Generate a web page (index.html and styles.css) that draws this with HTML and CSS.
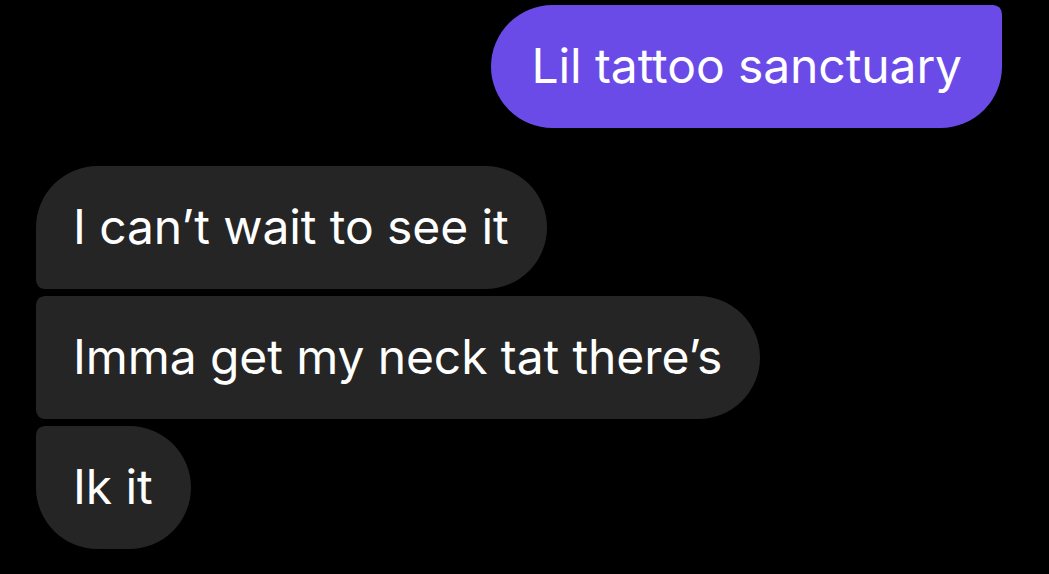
FILE: index.html
```html
<!DOCTYPE html>
<html>
<head>
<meta charset="utf-8">
<link rel="stylesheet" href="styles.css">
</head>
<body>
<div class="thread">
  <div class="bubble sent">Lil tattoo sanctuary</div>
  <div class="group">
    <div class="bubble recv first">I can’t wait to see it</div>
    <div class="bubble recv mid">Imma get my neck tat there’s</div>
    <div class="bubble recv last">Ik it</div>
  </div>
</div>
</body>
</html>
```

FILE: styles.css
```css
html, body {
  margin: 0;
  padding: 0;
  background: #000;
  height: 100%;
}
.thread {
  display: flex;
  flex-direction: column;
  padding: 5px 47px 0 36px;
  font-family: Inter, "Noto Sans", sans-serif;
}
.bubble {
  box-sizing: border-box;
  height: 123px;
  display: flex;
  align-items: center;
  padding: 0 38px 2px 37px;
  font-size: 48px;
  color: #fff;
  white-space: nowrap;
  letter-spacing: -0.1px;
}
.sent {
  align-self: flex-end;
  background: #6b4be8;
  border-radius: 62px 9px 62px 62px;
  padding-left: 40px;
  padding-right: 40px;
}
.group {
  display: flex;
  flex-direction: column;
  gap: 7px;
  margin-top: 38px;
}
.recv {
  align-self: flex-start;
  background: #252525;
}
.first { border-radius: 62px 62px 62px 9px; }
.mid { border-radius: 9px 62px 62px 9px; }
.last { border-radius: 9px 62px 62px 62px; }
```
